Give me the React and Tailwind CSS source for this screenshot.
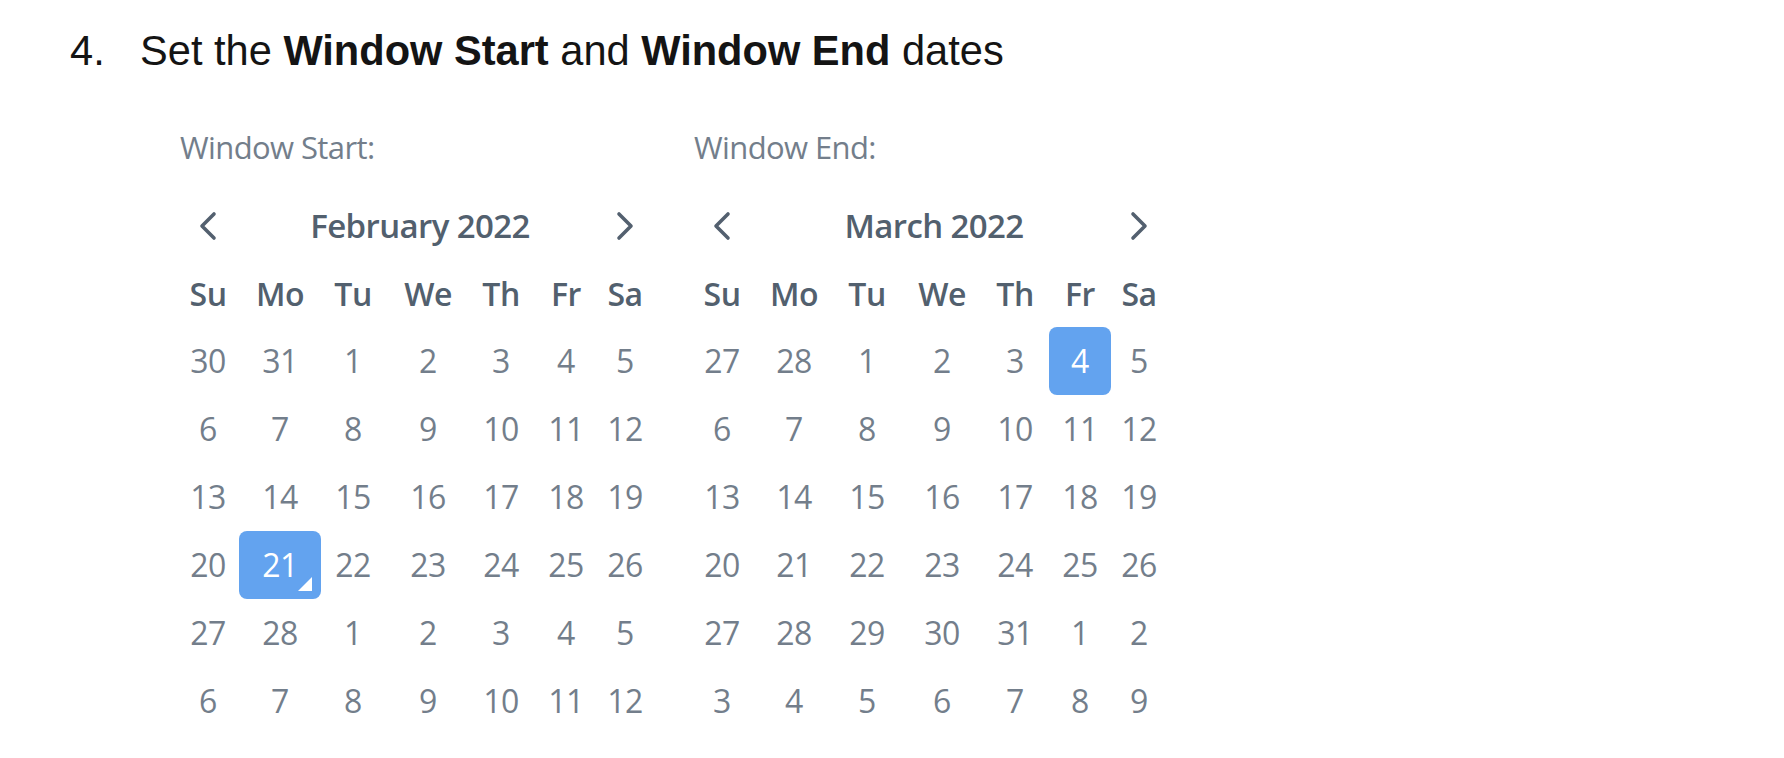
import React from 'react';

const colWidths = ['w-[72px]', 'w-[72px]', 'w-[74px]', 'w-[76px]', 'w-[70px]', 'w-[60px]', 'w-[58px]'];
const boxWidths = ['w-[62px]', 'w-[82px]', 'w-[66px]', 'w-[72px]', 'w-[62px]', 'w-[62px]', 'w-[56px]'];
const weekDays = ['Su', 'Mo', 'Tu', 'We', 'Th', 'Fr', 'Sa'];

const february = [
  [30, 31, 1, 2, 3, 4, 5],
  [6, 7, 8, 9, 10, 11, 12],
  [13, 14, 15, 16, 17, 18, 19],
  [20, 21, 22, 23, 24, 25, 26],
  [27, 28, 1, 2, 3, 4, 5],
  [6, 7, 8, 9, 10, 11, 12]
];

const march = [
  [27, 28, 1, 2, 3, 4, 5],
  [6, 7, 8, 9, 10, 11, 12],
  [13, 14, 15, 16, 17, 18, 19],
  [20, 21, 22, 23, 24, 25, 26],
  [27, 28, 29, 30, 31, 1, 2],
  [3, 4, 5, 6, 7, 8, 9]
];

const Chevron = ({ dir }) => (
  <svg width="20" height="30" viewBox="0 0 20 30" fill="none">
    <path
      d={dir === 'left' ? 'M16 3 L4 15 L16 27' : 'M4 3 L16 15 L4 27'}
      stroke="#53606f"
      strokeWidth="3.6"
      strokeLinecap="round"
      strokeLinejoin="round"
    />
  </svg>
);

const Calendar = ({ label, title, weeks, selected, marker }) => (
  <div className="w-[482px] flex flex-col">
    <div className="h-[70px] flex items-center pl-[8px] text-[31px] text-[#737e8b] tracking-[-0.6px]">
      {label}
    </div>

    <div className="mt-[9px] h-[70px] flex items-center">
      <div className="w-[72px] flex justify-center">
        <Chevron dir="left" />
      </div>
      <div className="flex-1 text-center text-[33px] font-semibold text-[#52606e] tracking-[-0.6px]">
        {title}
      </div>
      <div className="w-[58px] flex justify-center">
        <Chevron dir="right" />
      </div>
    </div>

    <div className="h-[66px] flex items-center">
      {weekDays.map((d, i) => (
        <div key={d} className={`${colWidths[i]} text-center text-[32px] font-semibold text-[#52606e] tracking-[-0.5px]`}>
          {d}
        </div>
      ))}
    </div>

    {weeks.map((week, r) => (
      <div key={r} className="h-[68px] flex">
        {week.map((day, c) => {
          const isSel = selected[0] === r && selected[1] === c;
          return (
            <div key={c} className={`${colWidths[c]} flex justify-center`}>
              {isSel ? (
                <div className={`${boxWidths[c]} h-[68px] shrink-0 relative flex items-center justify-center rounded-[8px] bg-[#63a3ef] text-white text-[32px] tracking-[-0.5px]`}>
                  {day}
                  {marker && (
                    <svg className="absolute right-[9px] bottom-[8px]" width="14" height="14" viewBox="0 0 14 14">
                      <path d="M14 0 L14 14 L0 14 Z" fill="#ffffff" />
                    </svg>
                  )}
                </div>
              ) : (
                <div className="h-[68px] flex items-center text-[32px] text-[#737e8b] tracking-[-0.5px]">
                  {day}
                </div>
              )}
            </div>
          );
        })}
      </div>
    ))}
  </div>
);

const App = () => {
  return (
    <div className="w-[1784px] h-[758px] bg-white overflow-hidden font-['Open_Sans',sans-serif]">
      <div className="pt-[26px] pl-[70px] flex text-[41.6px] leading-[50px] text-[#141414] font-['Liberation_Sans',Arial,sans-serif]">
        <span className="w-[70px]">4.</span>
        <span>
          Set the <b>Window Start</b> and <b>Window End</b> dates
        </span>
      </div>

      <div className="mt-[36px] pl-[172px] flex gap-[32px]">
        <Calendar label="Window Start:" title="February 2022" weeks={february} selected={[3, 1]} marker />
        <Calendar label="Window End:" title="March 2022" weeks={march} selected={[0, 5]} />
      </div>
    </div>
  );
};

export default App;
